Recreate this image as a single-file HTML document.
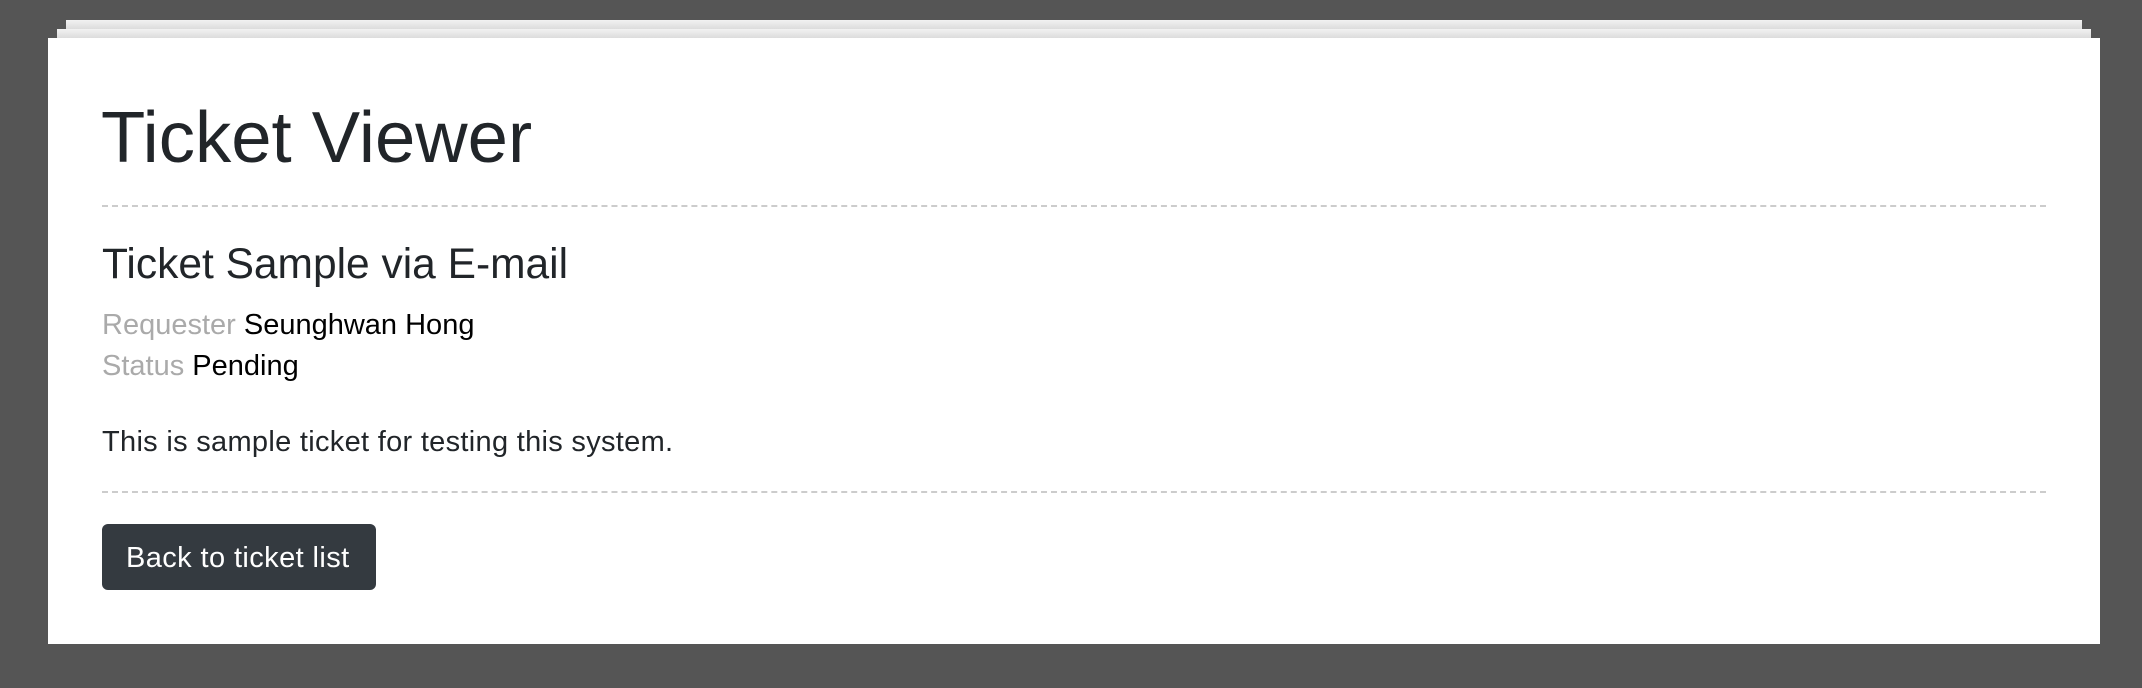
<!DOCTYPE html>
<html><head><meta charset="utf-8"><style>
html,body{margin:0;padding:0}
body{width:2142px;height:688px;background:#555;position:relative;overflow:hidden;font-family:"Liberation Sans",sans-serif;color:#212529}
.s{position:absolute;background:linear-gradient(#f2f2f2,#dcdcdc)}
.card{position:absolute;left:48px;top:38px;width:2052px;height:606px;background:#fff}
.t{position:absolute;line-height:1;white-space:nowrap}
.hr{position:absolute;left:102px;width:1944px;height:0;border-top:2px dashed #ccc}
.btn{position:absolute;left:102px;top:524px;width:274px;height:66px;background:#343a40;border-radius:6px}
.g{color:#aaa}
</style></head><body>
<div class="s" style="left:66px;top:20px;width:2016px;height:9px"></div>
<div class="s" style="left:57px;top:29px;width:2034px;height:9px"></div>
<div class="card"></div>
<div class="t" style="left:101px;top:102px;font-size:72.5px">Ticket Viewer</div>
<div class="hr" style="top:205px"></div>
<div class="t" style="left:102px;top:244px;font-size:42.5px">Ticket Sample via E-mail</div>
<div class="t" style="left:102px;top:311px;font-size:29px"><span class="g">Requester</span> <span style="color:#000">Seunghwan Hong</span></div>
<div class="t" style="left:102px;top:352px;font-size:29px"><span class="g">Status</span> <span style="color:#000">Pending</span></div>
<div class="t" style="left:102px;top:428px;font-size:29px;letter-spacing:0.3px">This is sample ticket for testing this system.</div>
<div class="hr" style="top:491px"></div>
<div class="btn"></div>
<div class="t" style="left:126px;top:544px;font-size:29px;letter-spacing:0.4px;color:#fff">Back to ticket list</div>
</body></html>
